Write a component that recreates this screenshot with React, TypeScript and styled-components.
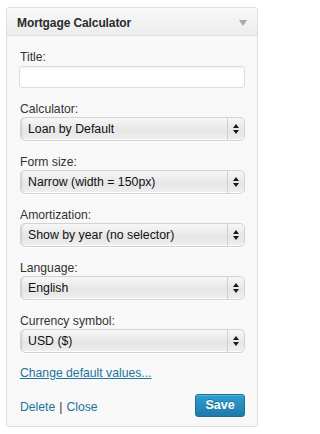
import React from "react";
import styled, { createGlobalStyle } from "styled-components";

const GlobalStyle = createGlobalStyle`
  html, body {
    margin: 0;
    padding: 0;
    background: #ffffff;
  }
  body {
    font-family: "Liberation Sans", Arial, Helvetica, sans-serif;
    font-size: 12.2px;
    color: #333333;
  }
  * { box-sizing: border-box; }
`;

const Page = styled.div`
  padding: 7px 8px 0 6px;
`;

const Widget = styled.div`
  width: 252px;
  height: 420px;
  border: 1px solid #dfdfdf;
  border-radius: 3px;
  background: #f8f8f8;
  display: flex;
  flex-direction: column;
  overflow: hidden;
`;

const Header = styled.div`
  height: 28px;
  flex: none;
  display: flex;
  align-items: center;
  justify-content: space-between;
  padding: 0 10px;
  border-bottom: 1px solid #dfdfdf;
  background: linear-gradient(to bottom, #f9f9f9, #ececec);
`;

const HeaderTitle = styled.h3`
  margin: 0;
  font-size: 12px;
  font-weight: bold;
  color: #2b2b2b;
  letter-spacing: -0.1px;
  padding-top: 2px;
`;

const Toggle = styled.span`
  width: 0;
  height: 0;
  border-left: 4px solid transparent;
  border-right: 4px solid transparent;
  border-top: 6px solid #a8a8a8;
  margin-top: 2px;
`;

const Body = styled.div`
  padding: 13px 12px 0 12px;
  display: flex;
  flex-direction: column;
  gap: 13px;
`;

const Field = styled.div`
  display: flex;
  flex-direction: column;
`;

const Label = styled.label`
  line-height: 16px;
  color: #333333;
  padding-left: 1px;
`;

const TextInput = styled.input`
  margin-top: 1px;
  width: 226px;
  height: 22px;
  border: 1px solid #dcdcdc;
  border-radius: 3px;
  background: #ffffff;
  box-shadow: inset 0 1px 1px rgba(0, 0, 0, 0.04);
  font: inherit;
  padding: 0 6px;
  outline: none;
`;

const SelectWrap = styled.div`
  position: relative;
  width: 225px;
  height: 24px;
  margin-left: 1px;
`;

const Select = styled.select`
  appearance: none;
  -webkit-appearance: none;
  width: 100%;
  height: 100%;
  border: 1px solid #d2d2d2;
  border-radius: 5px;
  padding: 0 20px 0 7px;
  font: inherit;
  font-size: 12.3px;
  color: #111111;
  background: linear-gradient(
    to bottom,
    #f7f7f7 0%,
    #ececec 35%,
    #e6e6e6 60%,
    #efefef 100%
  );
  box-shadow: inset 2px 0 2px -1px rgba(0, 0, 0, 0.12),
    inset 0 -1px 0 rgba(255, 255, 255, 0.9), 0 1px 0 rgba(255, 255, 255, 0.8);
  outline: none;
`;

const ArrowCell = styled.span`
  position: absolute;
  top: 1px;
  bottom: 1px;
  right: 1px;
  width: 17px;
  border-left: 1px solid #cfcfcf;
  display: flex;
  flex-direction: column;
  align-items: center;
  justify-content: center;
  gap: 2px;
  pointer-events: none;
`;

const Tri = styled.span<{ $up?: boolean }>`
  width: 0;
  height: 0;
  border-left: 3px solid transparent;
  border-right: 3px solid transparent;
  ${(p) =>
    p.$up
      ? "border-bottom: 4px solid #1a1a1a;"
      : "border-top: 4px solid #1a1a1a;"}
`;

const LinkRow = styled.div`
  margin-top: -1px;
  line-height: 16px;
`;

const Link = styled.a`
  color: #21759b;
  text-decoration: underline;
  cursor: pointer;
  padding-left: 1px;
`;

const Footer = styled.div`
  margin-top: 12px;
  height: 24px;
  padding: 0 12px;
  display: flex;
  align-items: center;
  justify-content: space-between;
`;

const Controls = styled.div`
  display: flex;
  align-items: center;
  gap: 4px;
  padding-left: 1px;
  padding-top: 4px;
  color: #333333;
`;

const PlainLink = styled.a`
  color: #21759b;
  text-decoration: none;
  cursor: pointer;
`;

const SaveButton = styled.button`
  width: 50px;
  height: 23px;
  border: 1px solid #1f6f95;
  border-radius: 3px;
  background: linear-gradient(to bottom, #2e9fd2, #1e7aa8);
  color: #ffffff;
  font-family: "Liberation Sans", Arial, sans-serif;
  font-weight: bold;
  font-size: 12.5px;
  text-shadow: 0 -1px 0 rgba(0, 0, 0, 0.25);
  box-shadow: inset 0 1px 0 rgba(120, 200, 230, 0.5);
  cursor: pointer;
  padding: 0 0 1px 0;
`;

const SelectField = ({ label, value }: { label: string; value: string }) => (
  <Field>
    <Label>{label}</Label>
    <SelectWrap>
      <Select defaultValue={value}>
        <option>{value}</option>
      </Select>
      <ArrowCell>
        <Tri $up />
        <Tri />
      </ArrowCell>
    </SelectWrap>
  </Field>
);

const selects = [
  { label: "Calculator:", value: "Loan by Default" },
  { label: "Form size:", value: "Narrow (width = 150px)" },
  { label: "Amortization:", value: "Show by year (no selector)" },
  { label: "Language:", value: "English" },
  { label: "Currency symbol:", value: "USD ($)" },
];

export default function App() {
  return (
    <>
      <GlobalStyle />
      <Page>
        <Widget>
          <Header>
            <HeaderTitle>Mortgage Calculator</HeaderTitle>
            <Toggle />
          </Header>
          <Body>
            <Field>
              <Label>Title:</Label>
              <TextInput type="text" />
            </Field>
            {selects.map((s) => (
              <SelectField key={s.label} label={s.label} value={s.value} />
            ))}
            <LinkRow>
              <Link>Change default values...</Link>
            </LinkRow>
          </Body>
          <Footer>
            <Controls>
              <PlainLink>Delete</PlainLink>
              <span>|</span>
              <PlainLink>Close</PlainLink>
            </Controls>
            <SaveButton>Save</SaveButton>
          </Footer>
        </Widget>
      </Page>
    </>
  );
}
